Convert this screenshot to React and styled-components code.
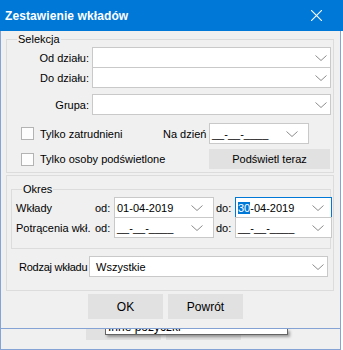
import React from "react";
import styled, { createGlobalStyle } from "styled-components";

const GlobalStyle = createGlobalStyle`
  html, body {
    margin: 0;
    padding: 0;
    background: #ffffff;
  }
  body {
    font-family: "Liberation Sans", Arial, sans-serif;
    font-size: 11px;
    color: #000;
  }
  * {
    box-sizing: border-box;
  }
`;

const Window = styled.div`
  width: 343px;
  height: 350px;
  display: flex;
  flex-direction: column;
  overflow: hidden;
`;

// pasek tytułu
const TitleBar = styled.div`
  height: 31px;
  flex: none;
  background: #0078d7;
  color: #fff;
  display: flex;
  align-items: center;
  justify-content: space-between;
  padding: 0 21px 0 5px;
`;

const Title = styled.div`
  font-weight: bold;
  font-size: 12px;
  letter-spacing: 0.1px;
`;

const Body = styled.div`
  width: 341px;
  flex: none;
  background: #f0f0f0;
  border: 1px solid #86a3d6;
  border-top: none;
  padding: 2px 6px 9px 5px;
`;

const Group = styled.fieldset`
  margin: 0 ${(p) => p.$mr ?? 0}px 0 ${(p) => p.$ml ?? 0}px;
  min-width: 0;
  border: 1px solid #dcdcdc;
  padding: 2px ${(p) => p.$pr ?? 2}px ${(p) => p.$pb ?? 3}px 0;
`;

const Legend = styled.legend`
  margin-left: ${(p) => p.$ml ?? 10}px;
  padding: 0 1px;
  line-height: 12px;
  font-size: 11px;
`;

const Panel = styled.div`
  margin-top: 2px;
  border: 1px solid #dcdcdc;
  padding: 7px 0 13px;
`;

const FormRow = styled.div`
  display: flex;
  align-items: center;
  margin-top: ${(p) => p.$mt ?? 0}px;
`;

const FieldLabel = styled.div`
  width: ${(p) => p.$w}px;
  flex: none;
  text-align: ${(p) => p.$align ?? "right"};
  padding: ${(p) => p.$pad ?? "0 3px 0 0"};
  letter-spacing: ${(p) => p.$tight ? "-0.25px" : "normal"};
  white-space: nowrap;
`;

const Combo = styled.div`
  width: ${(p) => (p.$w ? `${p.$w}px` : "auto")};
  flex: ${(p) => (p.$w ? "none" : "1")};
  height: 21px;
  position: relative;
  background: #fff;
  border: 1px solid ${(p) => (p.$focus ? "#0078d7" : "#c9c9c9")};
  display: flex;
  align-items: center;
  justify-content: space-between;
  padding: 0 ${(p) => p.$chev ?? 3}px 0 ${(p) => p.$pl ?? 2}px;
  margin-top: ${(p) => p.$mt ?? 0}px;
  white-space: nowrap;
`;

const Selected = styled.span`
  background: #0078d7;
  color: #fff;
  line-height: 14px;
`;

const CheckGrid = styled.div`
  display: grid;
  grid-template-columns: 142px 46px 121px;
  grid-template-rows: 21px 20px;
  row-gap: 5px;
  align-items: center;
  margin: 8px 0 0 14px;
`;

const CheckLabel = styled.label`
  display: flex;
  align-items: center;
  gap: 6px;
  grid-column: ${(p) => p.$span ?? "auto"};
`;

const Box = styled.span`
  width: 13px;
  height: 13px;
  border: 1px solid #b3b3b3;
  background: #fdfdfd;
`;

const Button = styled.button`
  width: ${(p) => p.$w ?? 75}px;
  height: ${(p) => p.$h ?? 25}px;
  border: none;
  background: #e1e1e1;
  font-family: inherit;
  font-size: ${(p) => (p.$big ? 12 : 11)}px;
  color: #000;
  padding: 0;
`;

const DateGrid = styled.div`
  display: grid;
  grid-template-columns: 79px 19px 100px 21px 97px;
  grid-template-rows: 21px 20px;
  align-items: center;
  margin-left: 4px;
`;

const DateLabel = styled.div`
  padding-left: ${(p) => p.$pl ?? 0}px;
  white-space: nowrap;
  font-size: 11px;
`;

const ButtonBar = styled.div`
  display: flex;
  gap: 5px;
  margin-top: 3px;
  padding-left: 82px;
`;

// okno pod spodem
const Behind = styled.div`
  position: relative;
  width: 341px;
  flex: none;
  height: 21px;
  background: #f0f0f0;
  border: 1px solid #86a3d6;
  border-top: none;
  display: flex;
  gap: 5px;
  padding-left: 85px;
`;

const BehindButton = styled.div`
  width: 75px;
  height: 11px;
  background: #e1e1e1;
`;

const Popup = styled.div`
  position: absolute;
  left: 104px;
  top: 0;
  width: 183px;
  height: 6px;
  background: #fff;
  border: 1px solid #646464;
  border-top: none;
  box-shadow: 2px 2px 3px rgba(0, 0, 0, 0.35);
  overflow: hidden;
`;

const PopupText = styled.div`
  font-size: 12px;
  line-height: 13px;
  margin: -8px 0 0 2px;
`;

const Chevron = () => (
  <svg width="12" height="6" viewBox="0 0 12 6">
    <polyline points="0.5,0.5 6,5.5 11.5,0.5" fill="none" stroke="#8c8c8c" strokeWidth="1" />
  </svg>
);

const CloseIcon = () => (
  <svg width="11" height="11" viewBox="0 0 11 11">
    <path d="M0 0L11 11M11 0L0 11" stroke="#fff" strokeWidth="1.1" />
  </svg>
);

const EMPTY_DATE = "__-__-____";

const App = () => {
  return (
    <Window>
      <GlobalStyle />
      <TitleBar>
        <Title>Zestawienie wkładów</Title>
        <CloseIcon />
      </TitleBar>
      <Body>
        <Group>
          <Legend>Selekcja</Legend>
          <FormRow>
            <FieldLabel $w={85}>Od działu:</FieldLabel>
            <Combo>
              <span />
              <Chevron />
            </Combo>
          </FormRow>
          <FormRow $mt={-1}>
            <FieldLabel $w={85}>Do działu:</FieldLabel>
            <Combo>
              <span />
              <Chevron />
            </Combo>
          </FormRow>
          <FormRow $mt={6}>
            <FieldLabel $w={85}>Grupa:</FieldLabel>
            <Combo>
              <span />
              <Chevron />
            </Combo>
          </FormRow>
          <CheckGrid>
            <CheckLabel>
              <Box />
              Tylko zatrudnieni
            </CheckLabel>
            <span>Na dzień</span>
            <Combo $w={100} $chev={10}>
              <span>{EMPTY_DATE}</span>
              <Chevron />
            </Combo>
            <CheckLabel $span="1 / 3">
              <Box />
              Tylko osoby podświetlone
            </CheckLabel>
            <Button $w={121} $h={20}>
              Podświetl teraz
            </Button>
          </CheckGrid>
        </Group>

        <Panel>
          <Group $ml={4} $mr={2} $pr={0} $pb={10}>
            <Legend>Okres</Legend>
            <DateGrid>
              <DateLabel>Wkłady</DateLabel>
              <DateLabel>od:</DateLabel>
              <Combo $w={100} $chev={10} $pl={2}>
                <span>01-04-2019</span>
                <Chevron />
              </Combo>
              <DateLabel $pl={2}>do:</DateLabel>
              <Combo $w={97} $chev={7} $pl={2} $focus>
                <span>
                  <Selected>30</Selected>-04-2019
                </span>
                <Chevron />
              </Combo>
              <DateLabel>Potrącenia wkł.</DateLabel>
              <DateLabel>od:</DateLabel>
              <Combo $w={100} $chev={10} $pl={2} $mt={-1}>
                <span>{EMPTY_DATE}</span>
                <Chevron />
              </Combo>
              <DateLabel $pl={2}>do:</DateLabel>
              <Combo $w={97} $chev={7} $pl={2} $mt={-1}>
                <span>{EMPTY_DATE}</span>
                <Chevron />
              </Combo>
            </DateGrid>
          </Group>
          <FormRow $mt={7}>
            <FieldLabel $w={82} $align="left" $pad="0 0 0 12px" $tight>
              Rodzaj wkładu
            </FieldLabel>
            <Combo $w={239} $pl={6}>
              <span>Wszystkie</span>
              <Chevron />
            </Combo>
          </FormRow>
        </Panel>

        <ButtonBar>
          <Button $big>OK</Button>
          <Button $big>Powrót</Button>
        </ButtonBar>
      </Body>
      <Behind>
        <BehindButton />
        <BehindButton />
        <Popup>
          <PopupText>Inne pożyczki</PopupText>
        </Popup>
      </Behind>
    </Window>
  );
};

export default App;
